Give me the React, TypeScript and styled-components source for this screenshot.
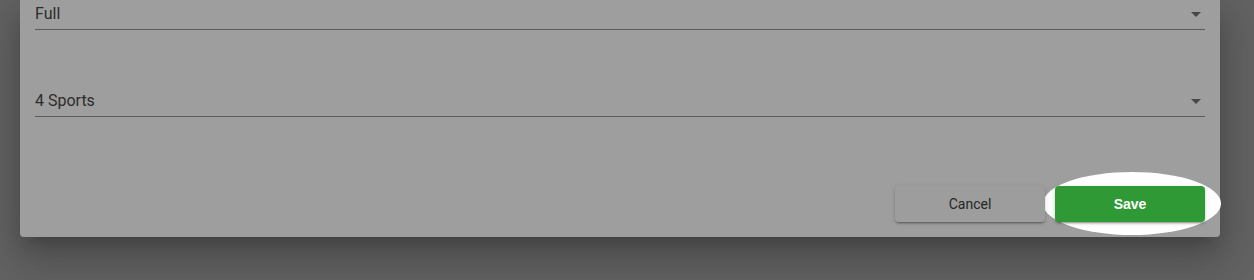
import React from 'react';
import styled, { createGlobalStyle } from 'styled-components';

const GlobalStyle = createGlobalStyle`
  html, body {
    margin: 0;
    padding: 0;
    background: #636363;
    font-family: Roboto, "Liberation Sans", sans-serif;
  }
`;

const Page = styled.div`
  width: 1254px;
  height: 280px;
  overflow: hidden;
  padding-left: 20px;
  box-sizing: border-box;
`;

const Dialog = styled.div`
  width: 1200px;
  box-sizing: border-box;
  padding: 0 15px 15px;
  background: #9e9e9e;
  border-radius: 0 0 4px 4px;
  box-shadow: 0 11px 15px -7px rgba(0, 0, 0, 0.2), 0 24px 38px 3px rgba(0, 0, 0, 0.14),
    0 9px 46px 8px rgba(0, 0, 0, 0.12);
`;

const Field = styled.div<{ $gap?: number }>`
  margin-top: ${(p) => p.$gap ?? 0}px;
`;

const Select = styled.div`
  display: flex;
  align-items: center;
  justify-content: space-between;
  padding: 4px 4px 6px 0;
  height: 19px;
  border-bottom: 1px solid #5c5c5c;
  font-size: 16px;
  line-height: 19px;
  color: #2c2c2c;
`;

const Arrow = styled.span`
  width: 0;
  height: 0;
  border-left: 5px solid transparent;
  border-right: 5px solid transparent;
  border-top: 5px solid #474747;
  margin-top: 1px;
`;

const Actions = styled.div`
  display: flex;
  justify-content: flex-end;
  gap: 10px;
  margin-top: 69px;
`;

const Button = styled.button<{ $primary?: boolean }>`
  position: relative;
  z-index: 1;
  width: 150px;
  height: 36px;
  border: none;
  border-radius: 4px;
  cursor: pointer;
  font-size: 14px;
  background: ${(p) => (p.$primary ? '#2f9a35' : '#9d9d9d')};
  color: ${(p) => (p.$primary ? '#ffffff' : '#262626')};
  font-family: ${(p) => (p.$primary ? '"Liberation Sans", Arial, sans-serif' : 'Roboto, sans-serif')};
  font-weight: ${(p) => (p.$primary ? 700 : 400)};
  box-shadow: 0 3px 1px -2px rgba(0, 0, 0, 0.2), 0 2px 2px 0 rgba(0, 0, 0, 0.14),
    0 1px 5px 0 rgba(0, 0, 0, 0.12);
`;

const Spot = styled.div`
  position: relative;
  display: flex;
`;

const Halo = styled.div`
  position: absolute;
  left: -12px;
  right: -16px;
  top: -14px;
  bottom: -13px;
  border-radius: 50%;
  background: #ffffff;
`;

const App = () => {
  return (
    <>
      <GlobalStyle />
      <Page>
        <Dialog>
          <Field>
            <Select>
              Full
              <Arrow />
            </Select>
          </Field>
          <Field $gap={57}>
            <Select>
              4 Sports
              <Arrow />
            </Select>
          </Field>
          <Actions>
            <Button>Cancel</Button>
            <Spot>
              <Halo />
              <Button $primary>Save</Button>
            </Spot>
          </Actions>
        </Dialog>
      </Page>
    </>
  );
};

export default App;
